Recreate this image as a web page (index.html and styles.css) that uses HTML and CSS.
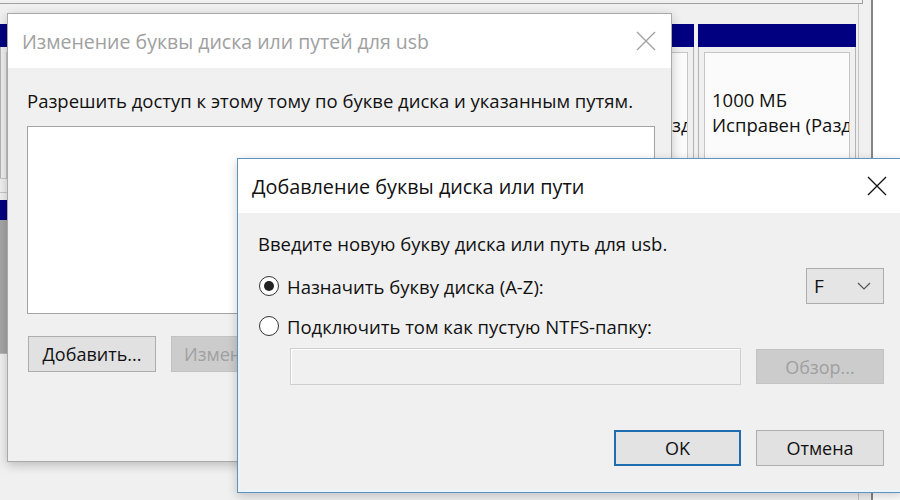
FILE: index.html
```html
<!DOCTYPE html>
<html lang="ru">
<head>
<meta charset="utf-8">
<title>Изменение буквы диска</title>
<link rel="stylesheet" href="styles.css">
</head>
<body>
<div class="desktop">
  <div class="mmc">
    <div class="mmc-main">
      <div class="top-pane"></div>
      <div class="disk-view">
        <div class="disk-row row1">
          <div class="part part-a">
            <div class="bar"></div>
            <div class="pbody">
              <div class="pinner">
                <div class="pline">&nbsp;</div>
                <div class="pline cut"><span class="cut-text">Исправен (Основной разде</span></div>
              </div>
            </div>
          </div>
          <div class="part part-b">
            <div class="bar"></div>
            <div class="pbody">
              <div class="pinner">
                <div class="pline">1000 МБ</div>
                <div class="pline">Исправен (Раздел)</div>
              </div>
            </div>
          </div>
        </div>
        <div class="disk-row row2">
          <div class="part part-c">
            <div class="bar"></div>
            <div class="pbody gray"></div>
          </div>
        </div>
      </div>
    </div>
    <div class="mmc-edge"></div>
  </div>

  <section class="dlg dlg-change">
    <header class="dlg-title">
      <span class="dlg-caption">Изменение буквы диска или путей для usb</span>
      <svg class="close" width="20" height="20" viewBox="0 0 20 20"><path d="M1 1 L19 19 M19 1 L1 19"/></svg>
    </header>
    <div class="dlg-body">
      <p class="txt">Разрешить доступ к этому тому по букве диска и указанным путям.</p>
      <div class="listbox"></div>
      <div class="btn-row">
        <button class="btn">Добавить...</button>
        <button class="btn disabled">Изменить...</button>
      </div>
    </div>
  </section>

  <section class="dlg dlg-add">
    <header class="dlg-title">
      <span class="dlg-caption">Добавление буквы диска или пути</span>
      <svg class="close" width="20" height="20" viewBox="0 0 20 20"><path d="M1 1 L19 19 M19 1 L1 19"/></svg>
    </header>
    <div class="dlg-body">
      <p class="txt">Введите новую букву диска или путь для usb.</p>
      <div class="opt-row first">
        <label class="radio"><span class="dot checked"></span><span>Назначить букву диска (A-Z):</span></label>
        <div class="combo"><span>F</span><svg width="14" height="8" viewBox="0 0 14 8"><path d="M1 1 L7 7 L13 1"/></svg></div>
      </div>
      <div class="opt-row second">
        <label class="radio"><span class="dot"></span><span>Подключить том как пустую NTFS-папку:</span></label>
      </div>
      <div class="path-row">
        <div class="field"></div>
        <button class="btn disabled">Обзор...</button>
      </div>
      <div class="footer">
        <button class="btn default">OK</button>
        <button class="btn">Отмена</button>
      </div>
    </div>
  </section>
</div>
</body>
</html>
```

FILE: styles.css
```css
* { box-sizing: border-box; }
html, body { margin: 0; padding: 0; }
body {
  width: 900px;
  height: 500px;
  overflow: hidden;
  background: #f0f0f0;
  font-family: "Open Sans", "Noto Sans", "Liberation Sans", sans-serif;
  font-size: 18.5px;
  color: #111;
}
.desktop {
  position: relative;
  width: 900px;
  height: 500px;
  overflow: hidden;
}

/* background: disk management window */
.mmc {
  display: flex;
  height: 500px;
}
.mmc-main {
  width: 871px;
  display: flex;
  flex-direction: column;
  background: #f0f0f0;
}
.mmc-edge {
  flex: 1;
  border-left: 2px solid #858585;
  background: #ffffff;
}
.top-pane {
  width: 863px;
  height: 4px;
  border-bottom: 1px solid #a0a0a0;
  border-right: 1px solid #a0a0a0;
}
.disk-view {
  width: 859px;
  flex: 1;
  border-right: 1px solid #c4c4c4;
  padding-top: 20px;
}
.disk-row {
  display: flex;
  gap: 4px;
}
.row1 {
  height: 155px;
  border-bottom: 1px solid #c8c8c8;
}
.row2 {
  margin-top: 13px;
  border-top: 1px solid #c8c8c8;
  padding-top: 7px;
  height: 162px;
  border-bottom: 1px solid #b8b8b8;
}
.part {
  display: flex;
  flex-direction: column;
}
.part-a { width: 694px; }
.part-b { width: 158px; }
.part-c { width: 700px; }
.bar {
  height: 23px;
  background: #000080;
  flex: none;
}
.row2 .bar { height: 20px; }
.pbody {
  flex: 1;
  border-left: 1px solid #b4b4b4;
  border-right: 1px solid #b4b4b4;
  padding: 5px 5px 0 5px;
  display: flex;
}
.pbody.gray {
  background: #a6a6a6;
  border: none;
}
.pinner {
  flex: 1;
  background: #fbfbfb;
  border-top: 1px solid #c6c6c6;
  border-left: 1px solid #c6c6c6;
  border-right: 1px solid #c6c6c6;
  padding: 34px 0 0 7px;
  overflow: hidden;
  white-space: nowrap;
}
.pline {
  line-height: 25px;
  height: 25px;
  overflow: hidden;
}
.cut {
  display: flex;
  justify-content: flex-end;
}
.cut-text { margin-right: -15px; }

/* dialogs (windows on the desktop) */
.dlg {
  position: absolute;
  display: flex;
  flex-direction: column;
  background: #f0f0f0;
}
.dlg-title {
  height: 54px;
  flex: none;
  background: #ffffff;
  display: flex;
  align-items: center;
  justify-content: space-between;
}
.dlg-caption {
  font-size: 19.5px;
  white-space: nowrap;
}
.dlg-add .dlg-caption { font-size: 19.8px; }
.close path {
  fill: none;
  stroke-width: 1.3;
}
.txt {
  margin: 0;
  line-height: 26px;
  white-space: nowrap;
}

.dlg-change {
  left: 7px;
  top: 13px;
  width: 665px;
  height: 449px;
  border: 1px solid #a9a9a9;
  box-shadow: 0 3px 10px rgba(0, 0, 0, 0.22);
}
.dlg-change .dlg-title { padding: 0 15px 0 14px; }
.dlg-change .dlg-caption { color: #a0a0a0; }
.dlg-change .close path { stroke: #a0a0a0; }
.dlg-change .dlg-body { padding: 20px 0 0 19px; }
.listbox {
  margin-top: 12px;
  width: 628px;
  height: 188px;
  background: #ffffff;
  border: 1px solid #a3a3a3;
}
.btn-row {
  margin-top: 22px;
  display: flex;
  gap: 15px;
  padding-left: 1px;
}

.btn {
  width: 128px;
  height: 36px;
  background: #e1e1e1;
  border: 1px solid #adadad;
  font-family: inherit;
  font-size: 18px;
  color: #111;
  padding: 0;
  line-height: 1;
}
.btn.disabled {
  background: #cccccc;
  border-color: #c2c2c2;
  color: #a0a0a0;
}
.btn.default {
  width: 127px;
  border: 2px solid #1f6db0;
  background: #e3e3e3;
}

.dlg-add {
  left: 237px;
  top: 158px;
  width: 666px;
  height: 335px;
  border: 1px solid #5f93bd;
  box-shadow: inset 0 0 0 2px #e9f5fa, 0 3px 10px rgba(0, 0, 0, 0.2);
}
.dlg-add .dlg-title { padding: 0 15px 0 14px; margin: 0; }
.dlg-add .close path { stroke: #111; }
.dlg-add .dlg-body { padding: 18px 18px 0 20px; }
.opt-row {
  display: flex;
  align-items: center;
  justify-content: space-between;
}
.opt-row.first {
  margin-top: 11px;
  height: 36px;
}
.opt-row.second {
  margin-top: 9px;
  height: 26px;
}
.radio {
  display: flex;
  align-items: center;
  gap: 8px;
  white-space: nowrap;
  padding-left: 1px;
}
.dot {
  width: 20px;
  height: 20px;
  border-radius: 50%;
  border: 1.5px solid #333;
  background: #fff;
  display: flex;
  align-items: center;
  justify-content: center;
  flex: none;
}
.dot.checked::after {
  content: "";
  width: 10px;
  height: 10px;
  border-radius: 50%;
  background: #222;
}
.combo {
  width: 78px;
  height: 36px;
  background: #e5e5e5;
  border: 1px solid #acacac;
  display: flex;
  align-items: center;
  justify-content: space-between;
  padding: 0 12px 0 7px;
  font-size: 19px;
}
.combo path {
  fill: none;
  stroke: #555;
  stroke-width: 1.2;
}
.path-row {
  margin-top: 9px;
  padding-left: 32px;
  display: flex;
  align-items: center;
  gap: 15px;
}
.field {
  width: 451px;
  height: 37px;
  background: #f0f0f0;
  border: 1px solid #cfcfcf;
  box-shadow: inset 1px 1px 0 #ffffff;
}
.path-row .btn { height: 35px; }
.footer {
  margin-top: 45px;
  display: flex;
  justify-content: flex-end;
  gap: 15px;
}
```
